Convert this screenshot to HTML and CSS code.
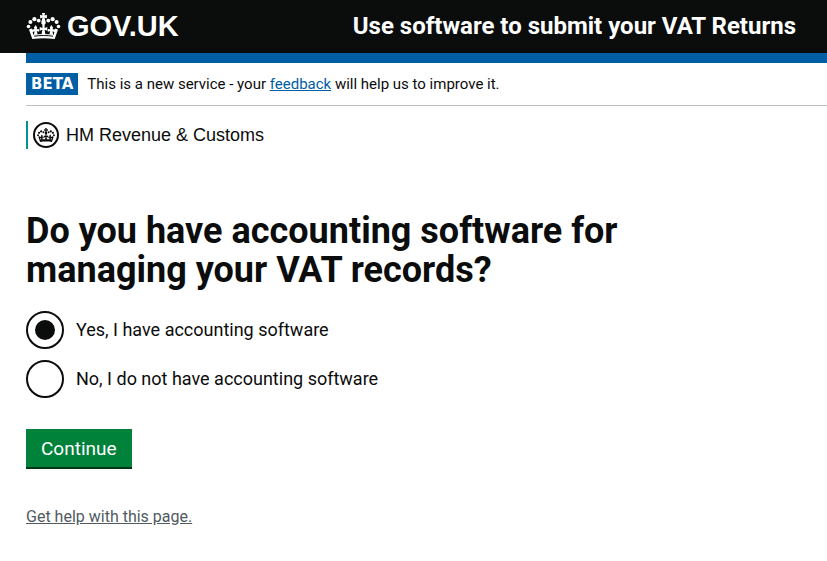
FILE: index.html
```
<!DOCTYPE html>
<html lang="en">
<head>
<meta charset="utf-8">
<meta name="viewport" content="width=device-width, initial-scale=1">
<title>Use software to submit your VAT Returns</title>
<link rel="stylesheet" href="styles.css">
</head>
<body>
<svg class="defs" aria-hidden="true">
  <symbol id="crown" viewBox="0 0 34 26">
    <g fill="currentColor">
      <circle cx="2" cy="13.500" r="1.800"/><circle cx="3.900" cy="8.900" r="2"/><circle cx="7.900" cy="6.200" r="2.100"/><circle cx="12.200" cy="7.600" r="1.900"/>
      <circle cx="32" cy="13.500" r="1.800"/><circle cx="30.100" cy="8.900" r="2"/><circle cx="26.100" cy="6.200" r="2.100"/><circle cx="21.800" cy="7.600" r="1.900"/>
      <path d="M15.400 0h3.200l-.7 2.500 2.500-.7v3.600l-2.500-.8 1.300 4.400c.4 1.600-.6 2.700-2.200 2.700s-2.600-1.100-2.200-2.700l1.300-4.400-2.500.8V1.800l2.500.7z"/>
      <path d="M2.500 16.500l2.800-1 1.500 6.200c6.800-1.100 13.600-1.100 20.400 0l1.500-6.200 2.800 1-3.300 9.500c-7.500-1.100-14.900-1.100-22.400 0z"/>
      <path d="M15.900 11h2.200v4l2.700-.9v3.600l-2.700-.9.800 4.500h-3.800l.8-4.500-2.700.9v-3.600l2.700.9z"/>
      <path d="M9.200 11.900l1.500 2.500-.5 1.800 2.500-.3v2.900l-2.400-.8.800 3.600-3.700.3.600-3.600-2.300.9-.4-2.800 2.600-.1-.4-1.900zM24.800 11.900l-1.500 2.500.5 1.800-2.500-.3v2.900l2.400-.8-.8 3.600 3.700.3-.6-3.600 2.300.9.400-2.800-2.600-.1.400-1.900z"/>
    </g>
    <path class="crown-band" d="M7.500 23.200c6.300-.9 12.700-.9 19 0"/>
  </symbol>
</svg>
<header class="header">
  <a class="logo" href="#"><svg class="logo-crown" aria-hidden="true"><use href="#crown"/></svg><span>GOV.UK</span></a>
  <a class="service" href="#">Use software to submit your VAT Returns</a>
</header>
<div class="page">
  <div class="phase">
    <strong class="tag">BETA</strong>
    <span>This is a new service - your <a class="link" href="#">feedback</a> will help us to improve it.</span>
  </div>
  <div class="organisation">
    <span class="crest"><svg class="crest-crown" aria-hidden="true"><use href="#crown"/></svg></span>
    <span>HM Revenue &amp; Customs</span>
  </div>
  <main class="main">
    <form>
      <fieldset class="question">
        <legend><h1 class="title">Do you have accounting software for managing your VAT records?</h1></legend>
        <div class="options">
          <div class="option"><input class="radio" type="radio" name="software" id="yes" checked><label for="yes">Yes, I have accounting software</label></div>
          <div class="option"><input class="radio" type="radio" name="software" id="no"><label for="no">No, I do not have accounting software</label></div>
        </div>
      </fieldset>
      <button class="button" type="submit">Continue</button>
    </form>
    <a class="help" href="#">Get help with this page.</a>
  </main>
</div>
</body>
</html>
```
FILE: styles.css
```
body {
  margin: 0;
  background: #fff;
  color: #0b0c0c;
  font-family: Roboto, "Liberation Sans", sans-serif;
  font-size: 15px;
  line-height: 20px;
}

.defs {
  position: absolute;
  width: 0;
  height: 0;
}

.header {
  display: flex;
  align-items: center;
  justify-content: space-between;
  box-sizing: border-box;
  min-height: 53px;
  padding: 0 31px 2px 26px;
  background: #0b0c0c;
}

.logo,
.service {
  color: #fff;
  font-weight: 700;
  text-decoration: none;
}

.logo {
  display: flex;
  align-items: center;
  gap: 6px;
  font-family: "Liberation Sans", Arial, sans-serif;
  font-size: 29px;
}

.logo-crown {
  width: 35px;
  height: 26px;
  color: #fff;
}

.crown-band {
  fill: none;
  stroke: #0b0c0c;
  stroke-width: 1;
}

.service {
  font-size: 24px;
}

.page {
  margin-left: 26px;
  border-top: 10px solid #005ea5;
}

.phase {
  display: flex;
  align-items: center;
  gap: 9px;
  padding: 10px 0;
  border-bottom: 1px solid #bfc1c3;
}

.tag {
  padding: 1px 5px;
  background: #005ea5;
  color: #fff;
  font-family: "DejaVu Sans", sans-serif;
  font-size: 15px;
}

.link {
  color: #005ea5;
}

.organisation {
  display: flex;
  align-items: center;
  gap: 7px;
  height: 28px;
  margin-top: 15px;
  padding-left: 5px;
  border-left: 2px solid #009390;
  font-family: "Liberation Sans", Arial, sans-serif;
  font-size: 18px;
}

.crest {
  display: grid;
  place-items: center;
  box-sizing: border-box;
  width: 26px;
  height: 26px;
  border: 2px solid #0b0c0c;
  border-radius: 50%;
}

.crest-crown {
  width: 18px;
  height: 16px;
}

.crest .crown-band {
  stroke: #fff;
}

.main {
  max-width: 620px;
  padding: 63px 0 32px;
}

.question {
  margin: 0;
  padding: 0;
  border: 0;
}

.question legend {
  padding: 0;
}

.title {
  margin: 0;
  font-size: 36px;
  line-height: 39px;
}

.options {
  display: grid;
  gap: 11px;
  padding-top: 21px;
}

.option {
  display: flex;
  align-items: center;
  gap: 12px;
  font-size: 18px;
}

.radio {
  appearance: none;
  display: grid;
  place-items: center;
  box-sizing: border-box;
  width: 38px;
  height: 38px;
  margin: 0;
  border: 2px solid #0b0c0c;
  border-radius: 50%;
}

.radio:checked::before {
  content: "";
  width: 20px;
  height: 20px;
  border-radius: 50%;
  background: #0b0c0c;
}

.button {
  display: block;
  margin: 31px 0 38px;
  padding: 10px 15px 8px;
  border: 0;
  border-bottom: 2px solid #003618;
  background: #00823b;
  color: #fff;
  font-family: inherit;
  font-size: 19px;
  line-height: 20px;
}

.help {
  color: #505a5f;
  font-size: 16px;
}
```
